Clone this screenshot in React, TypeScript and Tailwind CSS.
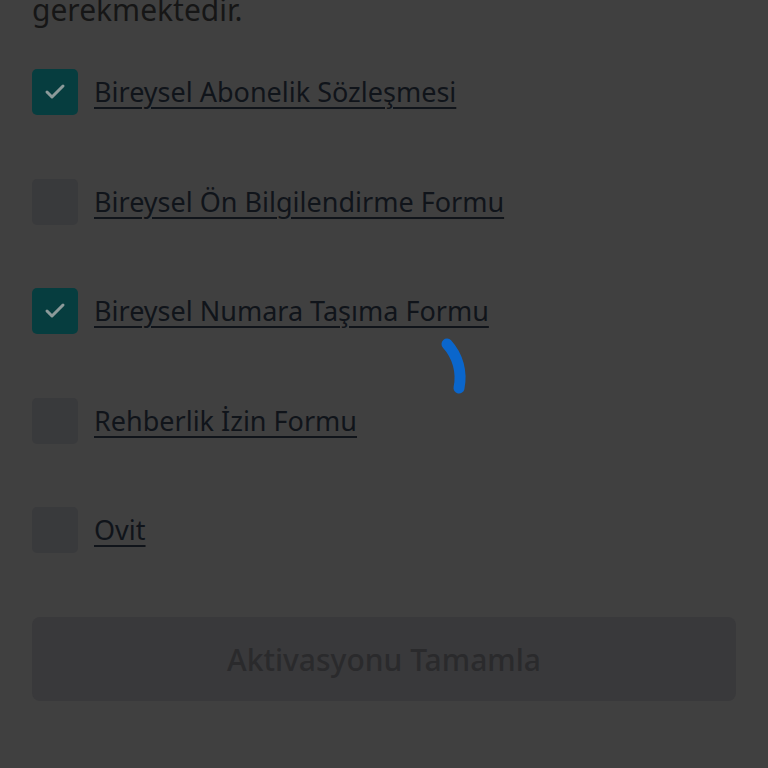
import { Check } from 'lucide-react';

const items = [
  { title: 'Bireysel Abonelik Sözleşmesi', checked: true },
  { title: 'Bireysel Ön Bilgilendirme Formu', checked: false },
  { title: 'Bireysel Numara Taşıma Formu', checked: true },
  { title: 'Rehberlik İzin Formu', checked: false },
  { title: 'Ovit', checked: false },
];

function Agreement({ title, checked }: { title: string; checked: boolean }) {
  return (
    <label className="flex items-center gap-4">
      <span
        className={
          checked
            ? 'flex h-[46px] w-[46px] shrink-0 items-center justify-center rounded-[5px] bg-[#063d3f]'
            : 'flex h-[46px] w-[46px] shrink-0 items-center justify-center rounded-[5px] bg-[#393a3c]'
        }
      >
        {checked && <Check className="h-[24px] w-[24px] text-[#8c9a9a]" strokeWidth={3} />}
      </span>
      <a
        href="#"
        className="text-[27px] leading-[36px] text-[#10141a] underline decoration-2 underline-offset-[5px]"
      >
        {title}
      </a>
    </label>
  );
}

export default function App() {
  return (
    <div className="relative h-[768px] w-[768px] overflow-hidden bg-[#404040] font-['Noto_Sans',sans-serif]">
      <div className="flex flex-col px-8">
        <p className="mt-[-9px] text-[30px] leading-[38px] text-[#161616]">gerekmektedir.</p>
        <div className="mt-[40px] flex flex-col gap-[63.5px]">
          {items.map((item) => (
            <Agreement key={item.title} title={item.title} checked={item.checked} />
          ))}
        </div>
        <button
          disabled
          className="mt-[64px] flex h-[84px] w-full items-center justify-center rounded-[8px] bg-[#39393b] text-[30px] font-medium text-[#2a2a2c]"
        >
          Aktivasyonu Tamamla
        </button>
      </div>

      {/* loading spinner over the page */}
      <svg className="absolute left-0 top-0" width="768" height="768" viewBox="0 0 768 768">
        <path
          d="M447 344 A50 50 0 0 1 459 388"
          fill="none"
          stroke="#0a66cc"
          strokeWidth="11"
          strokeLinecap="round"
        />
      </svg>
    </div>
  );
}
